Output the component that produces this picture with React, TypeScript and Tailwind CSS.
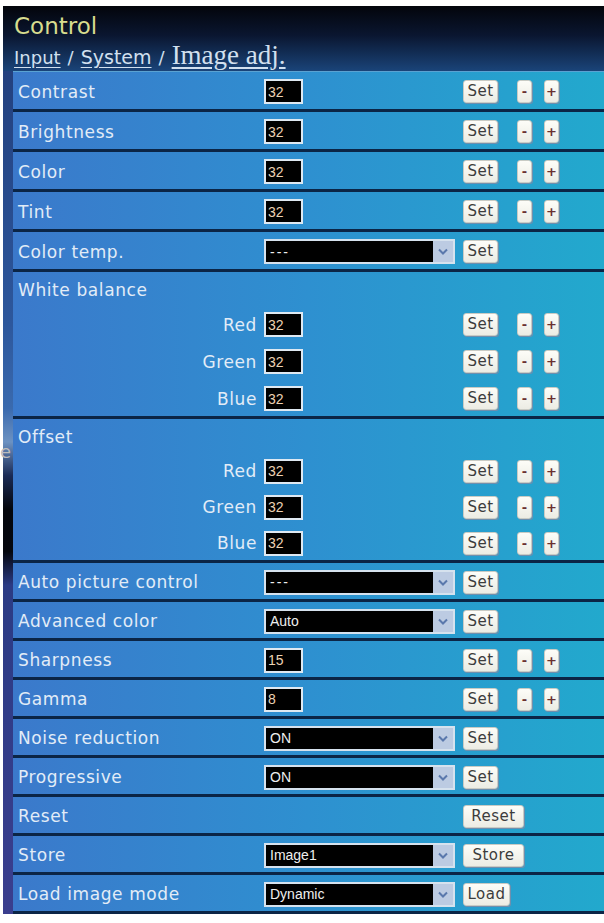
import React from "react";

const labelFont = { fontFamily: '"DejaVu Sans", Verdana, sans-serif' };

function NumBox({ value }: { value: string }) {
  return (
    <div
      className="mt-[2px] flex h-[25px] w-[39px] items-center border-2 border-[#dfe9f2] bg-black pl-[2px] text-[14px] leading-none text-[#ecd2b4]"
      style={{ fontFamily: '"Liberation Sans", Arial, sans-serif' }}
    >
      {value}
    </div>
  );
}

function SelectBox({ value }: { value: string }) {
  return (
    <div className="mt-[2px] flex h-[25px] w-[191px] border-2 border-[#d6e2ee] bg-black">
      <div
        className={`flex flex-1 items-center pl-[4px] text-[14px] leading-none text-[#eeeeee] ${value === "---" ? "tracking-[2px]" : ""}`}
        style={{ fontFamily: '"Liberation Sans", Arial, sans-serif' }}
      >
        {value}
      </div>
      <div className="flex w-[20px] items-center justify-center bg-[#bccbe2]">
        <svg width="10" height="7" viewBox="0 0 10 7">
          <path d="M1 1.5 L5 5.5 L9 1.5" fill="none" stroke="#5a78ac" strokeWidth="2" />
        </svg>
      </div>
    </div>
  );
}

function Btn({ label, w }: { label: string; w: string }) {
  return (
    <div
      className={`mt-[2px] flex h-[23px] ${w} items-center justify-center rounded-[3px] border border-[#c9cbc4] bg-[linear-gradient(180deg,#fdfdf8_0%,#ecece4_100%)] text-[15px] leading-none tracking-[0.5px] text-[#3c3c3c] shadow-[1px_1px_0_#6f8fae]`}
      style={labelFont}
    >
      {label}
    </div>
  );
}

function Step({ sign }: { sign: string }) {
  return (
    <div
      className="mt-[2px] flex h-[23px] w-[15px] items-center justify-center rounded-[3px] border border-[#c9cbc4] bg-[linear-gradient(180deg,#fdfdf8_0%,#ecece4_100%)] text-[13px] font-bold leading-none text-[#6a3030] shadow-[1px_1px_0_#6f8fae]"
      style={labelFont}
    >
      {sign}
    </div>
  );
}

function SetSteps() {
  return (
    <div className="flex items-center">
      <Btn label="Set" w="w-[35px]" />
      <div className="ml-[19px]">
        <Step sign="-" />
      </div>
      <div className="ml-[12px]">
        <Step sign="+" />
      </div>
    </div>
  );
}

function Label({ text, right }: { text: string; right?: boolean }) {
  return (
    <div
      className={`w-[251px] pt-[4px] text-[17px] tracking-[0.6px] text-[#e2ecf7] ${right ? "pr-[7px] text-right" : "pl-[5px]"}`}
      style={labelFont}
    >
      {text}
    </div>
  );
}

function NumRow({ label, value, h = "h-[40px]" }: { label: string; value: string; h?: string }) {
  return (
    <div className={`flex ${h} items-center border-b-[3px] border-[#0b2546]`}>
      <Label text={label} />
      <div className="w-[199px]">
        <NumBox value={value} />
      </div>
      <SetSteps />
    </div>
  );
}

function SelectRow({ label, value, action = "Set", bw = "w-[35px]", h = "h-[39px]" }: { label: string; value: string; action?: string; bw?: string; h?: string }) {
  return (
    <div className={`flex ${h} items-center border-b-[3px] border-[#0b2546]`}>
      <Label text={label} />
      <div className="w-[199px]">
        <SelectBox value={value} />
      </div>
      <Btn label={action} w={bw} />
    </div>
  );
}

function SubRow({ label, value, h }: { label: string; value: string; h: string }) {
  return (
    <div className={`flex ${h} items-center`}>
      <Label text={label} right />
      <div className="w-[199px]">
        <NumBox value={value} />
      </div>
      <SetSteps />
    </div>
  );
}

function Group({ title, sub }: { title: string; sub: string }) {
  return (
    <div className="flex flex-col border-b-[3px] border-[#0b2546]">
      <div className="flex h-[33px] items-center">
        <Label text={title} />
      </div>
      <SubRow label="Red" value="32" h={sub} />
      <SubRow label="Green" value="32" h={sub} />
      <SubRow label="Blue" value="32" h={sub} />
    </div>
  );
}

export default function App() {
  return (
    <div className="relative h-[923px] w-[604px] overflow-hidden bg-white">
      <div className="ml-[3px] mt-[6px] flex flex-col">
        {/* title and breadcrumb */}
        <div className="flex h-[65px] flex-col bg-[linear-gradient(180deg,#03050b_0%,#0a1630_45%,#1a4479_100%)] pl-[11px] pt-[6px]">
          <div className="text-[23px] leading-[28px] text-[#d7dc8e]" style={labelFont}>
            Control
          </div>
          <div className="flex items-baseline leading-[30px] text-[#d2e0ef]">
            <span className="text-[18px] underline underline-offset-[3px]" style={labelFont}>
              Input
            </span>
            <span className="px-[7px] text-[18px]" style={labelFont}>
              /
            </span>
            <span className="text-[19px] underline underline-offset-[3px]" style={labelFont}>
              System
            </span>
            <span className="px-[7px] text-[18px]" style={labelFont}>
              /
            </span>
            <span
              className="text-[27px] underline underline-offset-[3px]"
              style={{ fontFamily: '"Liberation Serif", "Times New Roman", serif' }}
            >
              Image adj.
            </span>
          </div>
        </div>

        {/* settings table */}
        <div className="flex">
          <div className="w-[10px] bg-[linear-gradient(180deg,#23407e_0%,#2d579c_30%,#3a6aae_40%,#6c92c2_44%,#1a2a55_48%,#04060c_52%,#05070e_57%,#2b3b84_61%,#3a3e8e_100%)]" />
          <div className="flex flex-1 flex-col border-t border-[#5aa2d2] bg-[linear-gradient(90deg,#3b79cb_0%,#2e90d0_50%,#22a9cd_100%)]">
            <NumRow label="Contrast" value="32" />
            <NumRow label="Brightness" value="32" />
            <NumRow label="Color" value="32" />
            <NumRow label="Tint" value="32" />
            <SelectRow label="Color temp." value="---" h="h-[40px]" />
            <Group title="White balance" sub="h-[37px]" />
            <Group title="Offset" sub="h-[36px]" />
            <SelectRow label="Auto picture control" value="---" />
            <SelectRow label="Advanced color" value="Auto" />
            <NumRow label="Sharpness" value="15" h="h-[39px]" />
            <NumRow label="Gamma" value="8" h="h-[39px]" />
            <SelectRow label="Noise reduction" value="ON" />
            <SelectRow label="Progressive" value="ON" />
            <div className="flex h-[39px] items-center border-b-[3px] border-[#0b2546]">
              <Label text="Reset" />
              <div className="w-[199px]" />
              <Btn label="Reset" w="w-[61px]" />
            </div>
            <SelectRow label="Store" value="Image1" action="Store" bw="w-[61px]" />
            <SelectRow label="Load image mode" value="Dynamic" action="Load" bw="w-[47px]" />
          </div>
        </div>
      </div>
      <span
        className="absolute left-[0px] top-[438px] text-[18px] text-[#bcbcbc]"
        style={labelFont}
      >
        e
      </span>
    </div>
  );
}
